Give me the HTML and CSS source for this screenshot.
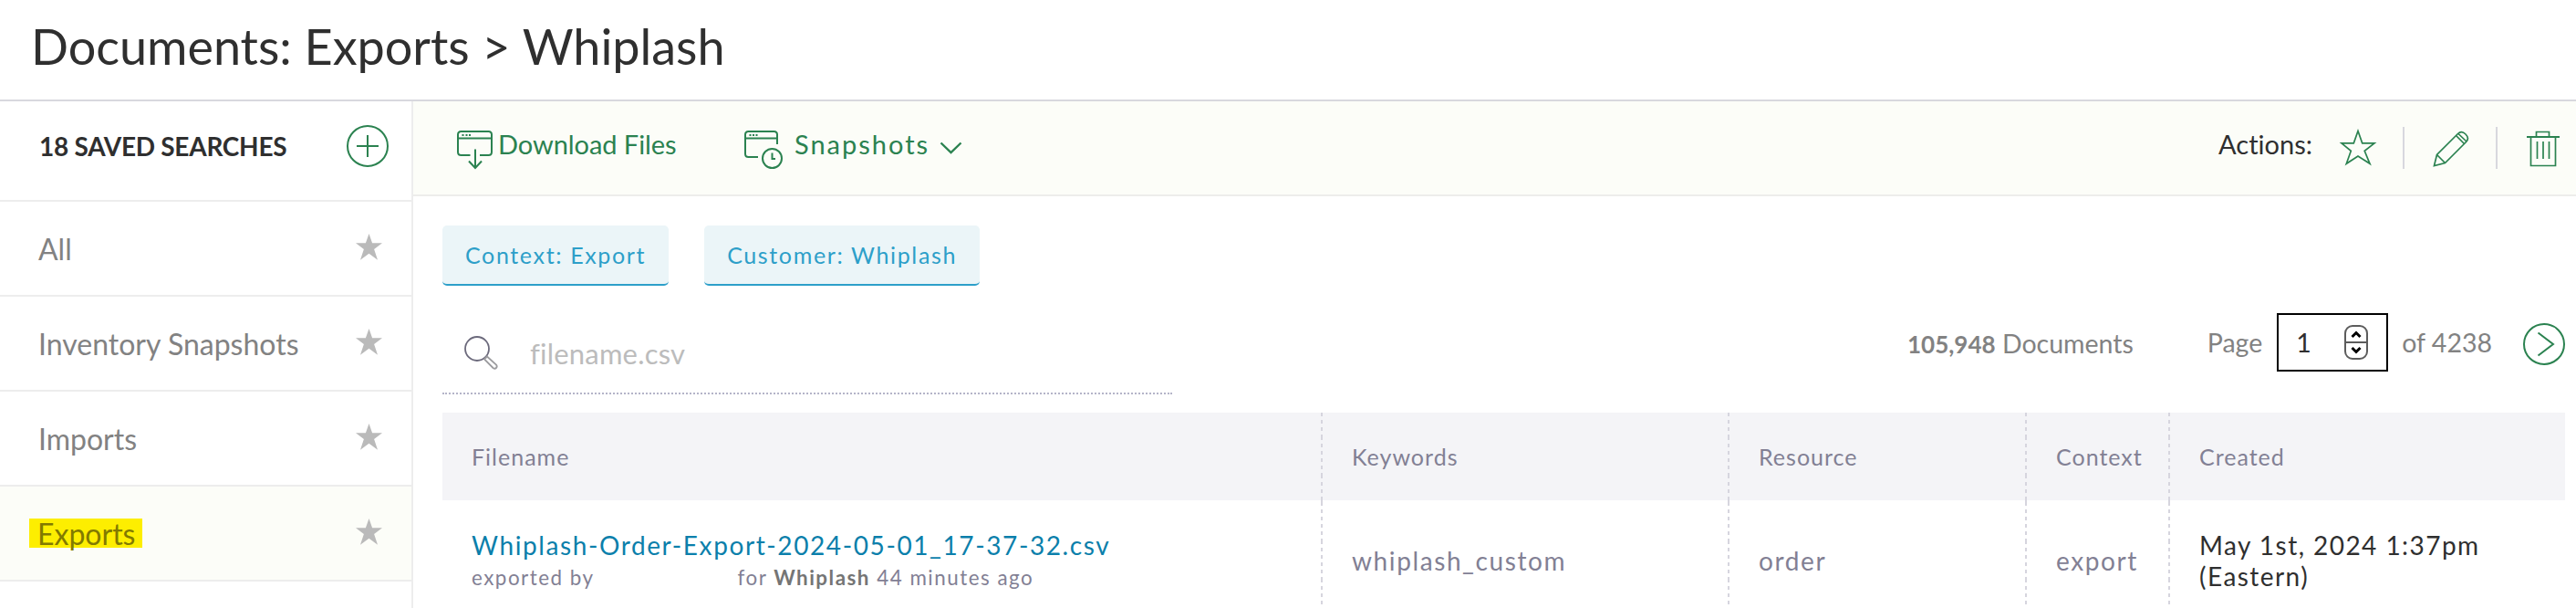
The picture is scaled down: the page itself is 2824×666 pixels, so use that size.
FILE: index.html
```html
<!DOCTYPE html>
<html lang="en">
<head>
<meta charset="utf-8">
<meta name="viewport" content="width=device-width, initial-scale=1.0">
<title>Documents: Exports &gt; Whiplash</title>
<link rel="stylesheet" href="styles.css">
</head>
<body>
  <!-- shared star shape for the saved searches list -->
  <svg class="defs" width="0" height="0">
    <symbol id="star" viewBox="0 0 29 29">
      <path d="M14.5 0l3.6 10.2H29l-8.9 6.7L24 28.7l-9.500-6.900L5 28.700l3.900-11.800L0 10.200h10.900z"/>
    </symbol>
  </svg>

  <header class="page-header">
    <h1>Documents: Exports &gt; Whiplash</h1>
  </header>

  <div class="layout">
    <aside class="sidebar">
      <div class="sidebar-head">
        <h2>18 SAVED SEARCHES</h2>
        <button class="icon-btn" aria-label="Add search">
          <svg width="46" height="46" viewBox="0 0 46 46" class="line thick"><circle cx="23" cy="23" r="22"/><path d="M23 11v24M11 23h24"/></svg>
        </button>
      </div>
      <ul class="searches">
        <li><a href="#">All</a><svg class="star" width="29" height="29"><use href="#star"/></svg></li>
        <li><a href="#">Inventory Snapshots</a><svg class="star" width="29" height="29"><use href="#star"/></svg></li>
        <li><a href="#">Imports</a><svg class="star" width="29" height="29"><use href="#star"/></svg></li>
        <li class="active"><a href="#"><mark>Exports</mark></a><svg class="star" width="29" height="29"><use href="#star"/></svg></li>
      </ul>
    </aside>

    <main>
      <div class="toolbar">
        <a href="#" class="tool download">
          <svg width="40" height="43" viewBox="0 0 40 43" class="line">
            <path d="M14.500 27H4.500Q1 27 1 23.500V4.500Q1 1 4.500 1H34.500Q38 1 38 4.500V23.500Q38 27 34.500 27H25"/>
            <path d="M1 8.500H38M20 20.500V40M13 33.500l7 7.500 7-7.500"/>
            <path d="M5.500 5h2M9.500 5h2M13 5h2"/>
          </svg>
          <span>Download Files</span>
        </a>
        <a href="#" class="tool snapshots">
          <svg width="43" height="43" viewBox="0 0 43 43" class="line">
            <path d="M15 29H4.500Q1 29 1 25.500V4.500Q1 1 4.500 1H32.500Q36 1 36 4.500V15"/>
            <path d="M1 8.500H36M5.500 5h2M9 5h2M12.500 5h2"/>
            <circle cx="30.500" cy="30.500" r="10.500"/>
            <path d="M30.500 24.500v6.500h3.500"/>
          </svg>
          <span>Snapshots</span>
          <svg class="line chevron" width="25" height="15" viewBox="0 0 25 15"><path d="M1.500 1.500l11 10.500 11-10.500"/></svg>
        </a>
        <div class="actions">
          <span class="label">Actions:</span>
          <svg class="line thin act-star" width="42" height="42" viewBox="0 0 42 42"><path d="M21 2.500l4.700 13.300H39l-10.800 8.500 5.800 14L21 30 8.300 38.300l5-14L3 15.800h13.300z"/></svg>
          <i class="sep"></i>
          <svg class="line thin act-pencil" width="40" height="40" viewBox="0 0 40 40">
            <path d="M1.500 38.500L4.500 26.500 27.500 3.500Q31.500-.5 36 4T36.500 12.500L13.500 35.500z"/>
            <path d="M4.500 26.500l9 9M25.500 5.500l9 9M28 3.500l9 8.500"/>
          </svg>
          <i class="sep"></i>
          <svg class="line thin act-trash" width="36" height="40" viewBox="0 0 36 40">
            <path class="lid" d="M0 7h36"/>
            <path d="M10.500 6V1.500h14V6M4.500 7v31.500h27V7M11.500 12v19M18 12v19M24.500 12v19"/>
          </svg>
        </div>
      </div>

      <div class="chips">
        <span class="chip">Context: Export</span>
        <span class="chip">Customer: Whiplash</span>
      </div>

      <div class="filters">
        <div class="search">
          <svg width="38" height="38" viewBox="0 0 38 38">
            <circle cx="14" cy="14" r="13"/>
            <path class="handle" d="M22 25.500l3-3L35 31.500q1.500 2 0 3.500t-3.500 0z"/>
          </svg>
          <input type="text" placeholder="filename.csv">
        </div>
        <div class="pager">
          <span class="total"><b>105,948</b> Documents</span>
          <span class="page">Page</span>
          <div class="page-input">
            <span>1</span>
            <svg width="26" height="38" viewBox="0 0 26 38">
              <rect x="1" y="1" width="24" height="36" rx="8"/>
              <path d="M1 19h24"/>
              <path class="arrow" d="M8.500 13l4.500-4.500 4.500 4.500M8.500 25l4.500 4.500 4.500-4.500"/>
            </svg>
          </div>
          <span class="of">of 4238</span>
          <button class="icon-btn" aria-label="Next page">
            <svg width="46" height="46" viewBox="0 0 46 46" class="line"><circle cx="23" cy="23" r="22"/><path d="M16.500 10.500L33 23 16.500 35.500"/></svg>
          </button>
        </div>
      </div>

      <table>
        <colgroup>
          <col class="c-file"><col class="c-key"><col class="c-res"><col class="c-ctx"><col>
        </colgroup>
        <thead>
          <tr><th>Filename</th><th>Keywords</th><th>Resource</th><th>Context</th><th>Created</th></tr>
        </thead>
        <tbody>
          <tr>
            <td>
              <a href="#" class="file">Whiplash-Order-Export-2024-05-01_17-37-32.csv</a>
              <div class="meta">exported by<span class="user"></span>for <b>Whiplash</b> 44 minutes ago</div>
            </td>
            <td>whiplash_custom</td>
            <td>order</td>
            <td>export</td>
            <td class="created">May 1st, 2024 1:37pm<br>(Eastern)</td>
          </tr>
        </tbody>
      </table>
    </main>
  </div>
</body>
</html>
```
FILE: styles.css
```css
* {
  box-sizing: border-box;
}
body {
  margin: 0;
  height: 666px;
  overflow: hidden;
  display: flex;
  flex-direction: column;
  font-family: Lato, sans-serif;
  font-size: 28px;
  font-variant-ligatures: none;
  color: #2f2f2f;
  background: #fff;
}
a {
  text-decoration: none;
  color: inherit;
}
.defs {
  position: absolute;
}
svg {
  display: block;
  flex: none;
}
.line {
  fill: none;
  stroke: #2b8250;
  stroke-width: 2;
}
.line.thin {
  stroke-width: 1.7;
}
.icon-btn {
  border: 0;
  padding: 0;
  background: none;
}

/* header */
.page-header {
  flex: none;
  height: 111px;
  padding-left: 34px;
  border-bottom: 2px solid #d8d8de;
}
.page-header h1 {
  margin: 0;
  font-size: 54px;
  font-weight: 400;
  line-height: 102px;
  letter-spacing: -0.04px;
}
.layout {
  display: flex;
  flex: 1;
  min-height: 0;
}

/* sidebar */
.sidebar {
  flex: none;
  width: 453px;
  border-right: 2px solid #ededed;
}
.sidebar-head {
  display: flex;
  align-items: center;
  justify-content: space-between;
  height: 110px;
  padding: 0 25px 10px 43px;
  border-bottom: 2px solid #ededed;
}
.sidebar-head h2 {
  margin: 0;
  font-size: 28px;
  font-weight: 700;
  letter-spacing: -0.27px;
}
.searches {
  list-style: none;
  margin: 0;
  padding: 0;
}
.searches li {
  display: flex;
  align-items: center;
  justify-content: space-between;
  height: 104px;
  padding: 0 32px 0 42px;
  border-bottom: 2px solid #ededed;
  font-size: 32px;
  color: #828282;
}
.searches .active {
  background: #fcfdf8;
}
.searches mark {
  display: block;
  width: 124px;
  height: 32px;
  margin-left: -10px;
  padding-left: 9px;
  line-height: 33px;
  background: #fdee00;
  color: #827a00;
}
.star {
  margin-bottom: 3px;
  fill: #bababa;
}

/* toolbar */
main {
  flex: 1;
  min-width: 0;
}
.toolbar {
  display: flex;
  height: 104px;
  padding: 0 18px 0 48px;
  border-bottom: 2px solid #ededeb;
  background: #fcfdf8;
  font-size: 29px;
  line-height: 93px;
}
.tool {
  display: flex;
  color: #2b8250;
}
.tool svg {
  margin-top: 32px;
}
.download {
  width: 315px;
}
.download span {
  margin-left: 5px;
  letter-spacing: -0.06px;
}
.snapshots span {
  margin-left: 12px;
  letter-spacing: 2px;
}
.snapshots .chevron {
  margin: 44px 0 0 11px;
  stroke-width: 2.4;
}
.actions {
  display: flex;
  margin-left: auto;
}
.actions .label {
  margin-right: 29px;
}
.sep {
  width: 2px;
  height: 46px;
  margin-top: 28px;
  background: #d8d8de;
}
.act-star {
  margin: 30px 28px 0 0;
}
.act-pencil {
  margin: 32px 29px 0 31px;
}
.act-trash {
  margin: 32px 0 0 32px;
}
.act-trash .lid {
  stroke-width: 2;
}

/* filter chips */
.chips {
  display: flex;
  gap: 39px;
  padding: 32px 32px 0;
}
.chip {
  height: 66px;
  padding: 0 25px;
  line-height: 64px;
  font-size: 25px;
  letter-spacing: 1.64px;
  color: #2d9fc9;
  background: #ebf5f8;
  border-bottom: 2px solid #2d9fc9;
  border-radius: 5px;
}

/* search and pager */
.filters {
  display: flex;
  justify-content: space-between;
  margin: 30px 12px 20px 32px;
}
.search {
  display: flex;
  align-items: center;
  width: 800px;
  height: 89px;
  padding-left: 24px;
  border-bottom: 2px dotted #b4b4c8;
}
.search svg {
  fill: none;
  stroke: #6c6a7c;
  stroke-width: 1.8;
}
.search .handle {
  stroke: #9c9c9f;
}
.search input {
  flex: 1;
  margin-left: 34px;
  padding: 0;
  border: 0;
  outline: 0;
  font: 31px Lato, sans-serif;
  letter-spacing: 0.2px;
}
.search input::placeholder {
  color: #bcbcbc;
}
.pager {
  display: flex;
  align-items: center;
  height: 64px;
  font-size: 28.5px;
  color: #828282;
}
.total {
  margin-right: 81px;
  padding-top: 2px;
}
.total b {
  font-size: 26px;
}
.page-input {
  display: flex;
  align-items: center;
  justify-content: space-between;
  width: 122px;
  height: 64px;
  margin: 0 15px 0 16px;
  padding: 0 20px 0 19px;
  border: 2px solid #000;
  color: #2f2f2f;
}
.page-input svg {
  fill: none;
  stroke: #5c5c5c;
  stroke-width: 2;
}
.page-input .arrow {
  stroke: #000;
  stroke-width: 3;
}
.of {
  margin-right: 34px;
}
.pager .icon-btn {
  margin-top: 4px;
}

/* documents table */
table {
  table-layout: fixed;
  width: 2327px;
  margin-left: 32px;
  border-collapse: collapse;
  color: #828094;
}
.c-file { width: 963px; }
.c-key { width: 446px; }
.c-res { width: 326px; }
.c-ctx { width: 157px; }
th, td {
  padding: 0 0 0 34px;
  text-align: left;
}
th {
  height: 96px;
  font-size: 25px;
  font-weight: 400;
  letter-spacing: 1px;
  background-color: #f4f4f7;
}
td {
  height: 132px;
  letter-spacing: 1.6px;
  line-height: 34px;
}
th:first-child, td:first-child {
  padding-left: 32px;
}
/* dashed column divider */
th + th, td + td {
  background-image: linear-gradient(#d6d5de 6px, transparent 6px 10px, #d6d5de 10px 14px, transparent 14px 18px, #d6d5de 18px 22px, transparent 22px 26px, #d6d5de 26px 30px, transparent 30px 34px, #d6d5de 34px 38px, transparent 38px);
  background-size: 2px 42px;
  background-repeat: repeat-y;
}
th + th {
  background-position: 0 -18px;
}
.file {
  display: block;
  padding-top: 2px;
  color: #0b7fab;
}
.meta {
  padding-top: 2px;
  font-size: 22.4px;
  letter-spacing: 1.5px;
}
.meta b {
  color: #757575;
}
.user {
  display: inline-block;
  width: 157px;
}
.created {
  color: #2f2f2f;
  letter-spacing: 1.45px;
}
```
